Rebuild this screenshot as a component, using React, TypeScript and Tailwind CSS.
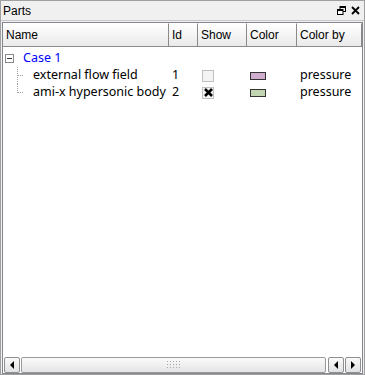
import React from "react";

const rowFont = { fontFamily: '"Noto Sans", "DejaVu Sans", sans-serif' };

function Arrow({ dir }: { dir: "left" | "right" }) {
  return (
    <svg width="6" height="8" viewBox="0 0 6 8">
      {dir === "left" ? (
        <polygon points="5,0 5,8 1,4" fill="#000" />
      ) : (
        <polygon points="1,0 1,8 5,4" fill="#000" />
      )}
    </svg>
  );
}

function ScrollBtn({ dir }: { dir: "left" | "right" }) {
  return (
    <div className="w-[16px] h-[16px] flex items-center justify-center border border-[#8e8f8f] rounded-[2px] bg-gradient-to-b from-[#fafafa] to-[#e2e2e2]">
      <Arrow dir={dir} />
    </div>
  );
}

export default function App() {
  const headerCell =
    "h-full flex items-center pl-[3px] border-r border-[#8a8a8a] bg-gradient-to-b from-[#ffffff] to-[#eaeaea] border-t border-t-[#ffffff]";
  return (
    <div
      className="w-[365px] h-[375px] bg-[#f0f0f0] border border-[#a0a0a0] flex flex-col text-black"
      style={{ fontFamily: '"Liberation Sans", Arial, sans-serif' }}
    >
      {/* title bar */}
      <div className="h-[20px] flex items-center justify-between pl-[2px] pr-[4px] border-b border-[#c8c8c8] text-[12px]">
        <span>Parts</span>
        <div className="flex items-center gap-[5px]">
          <svg width="9" height="9" viewBox="0 0 9 9">
            <rect x="3" y="0.5" width="5.5" height="5" fill="none" stroke="#000" strokeWidth="1" />
            <rect x="3" y="0" width="6" height="2" fill="#000" />
            <rect x="0.5" y="3.5" width="5.5" height="5" fill="#fff" stroke="#000" strokeWidth="1" />
            <rect x="0" y="3" width="6" height="2" fill="#000" />
          </svg>
          <svg width="9" height="9" viewBox="0 0 9 9">
            <path d="M1 1 L8 8 M8 1 L1 8" stroke="#000" strokeWidth="1.8" />
          </svg>
        </div>
      </div>
      {/* tree widget */}
      <div className="mt-[1px] mx-[1px] flex-1 border border-[#828790] bg-white flex flex-col">
        {/* header */}
        <div className="h-[24px] flex text-[12px] border-b border-[#8a8a8a]">
          <div className={`${headerCell} w-[166px]`}>Name</div>
          <div className={`${headerCell} w-[29px]`}>Id</div>
          <div className={`${headerCell} w-[49px]`}>Show</div>
          <div className={`${headerCell} w-[50px]`}>Color</div>
          <div className={`${headerCell} flex-1`}>Color by</div>
        </div>
        {/* rows */}
        <div className="flex-1 relative text-[12.5px]" style={rowFont}>
          <div className="h-[17px] mt-[3px] flex items-center">
            <div className="w-[20px] flex items-center pl-[2px]">
              <div className="w-[9px] h-[9px] border border-[#8a8a8a] bg-white flex items-center justify-center">
                <div className="w-[5px] h-[1px] bg-[#333]" />
              </div>
            </div>
            <span className="text-[#0000ff]">Case 1</span>
          </div>
          {[
            { name: "external flow field", id: "1", checked: false, color: "#d1aed0" },
            { name: "ami-x hypersonic body", id: "2", checked: true, color: "#c2d4b2" },
          ].map((r, i) => (
            <div key={i} className="h-[17px] flex items-center">
              <div className="w-[166px] flex items-center h-full">
                <div className="w-[30px] h-full relative shrink-0">
                  <div
                    className={`absolute left-[14px] top-0 w-0 border-l border-dotted border-[#a0a0a0] ${i === 0 ? "h-full" : "h-[9px]"}`}
                  />
                  <div className="absolute left-[15px] top-[8px] w-[5px] h-0 border-t border-dotted border-[#a0a0a0]" />
                </div>
                <span className="whitespace-nowrap">{r.name}</span>
              </div>
              <div className="w-[29px] pl-[3px]">{r.id}</div>
              <div className="w-[49px] pl-[4px] flex items-center">
                <div className="w-[12px] h-[12px] border border-[#c0c0c0] bg-[#f4f4f4] flex items-center justify-center">
                  {r.checked && (
                    <svg width="9" height="9" viewBox="0 0 9 9">
                      <path d="M1 1 L8 8 M8 1 L1 8" stroke="#000" strokeWidth="2.6" />
                    </svg>
                  )}
                </div>
              </div>
              <div className="w-[50px] pl-[3px] flex items-center">
                <div className="w-[16px] h-[8px] border border-[#333]" style={{ backgroundColor: r.color }} />
              </div>
              <div className="flex-1 pl-[3px]">pressure</div>
            </div>
          ))}
        </div>
        {/* scrollbar */}
        <div className="h-[17px] flex items-center px-[1px]">
          <ScrollBtn dir="left" />
          <div className="flex-1 h-[16px] mx-[1px] border border-[#9a9a9a] rounded-[2px] bg-gradient-to-b from-[#fbfbfb] to-[#e4e4e4] flex items-center justify-center">
            <div className="grid grid-cols-5 gap-x-[2px] gap-y-[2px]">
              {Array.from({ length: 15 }).map((_, k) => (
                <div key={k} className="w-[1px] h-[1px] bg-[#a8a8a8]" />
              ))}
            </div>
          </div>
          <div className="flex gap-[1px] ml-[1px]">
            <ScrollBtn dir="left" />
            <ScrollBtn dir="right" />
          </div>
        </div>
      </div>
    </div>
  );
}
